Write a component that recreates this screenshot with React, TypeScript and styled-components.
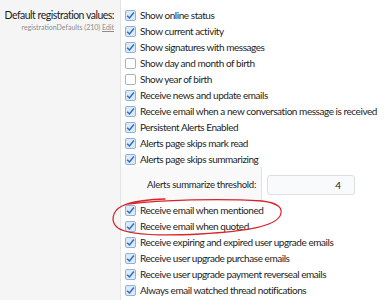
import React, { FC } from "react";
import styled, { createGlobalStyle } from "styled-components";

const Global = createGlobalStyle`
  html, body {
    margin: 0;
    padding: 0;
    background: #ffffff;
  }
  body {
    font-family: Lato, "Liberation Sans", Arial, sans-serif;
    color: #1d1d1d;
  }
`;

const Page = styled.div`
  position: relative;
  display: flex;
  width: 384px;
  height: 300px;
  overflow: hidden;
`;

const LabelCol = styled.div`
  width: 112px;
  flex: none;
  background: #f5f5f5;
  border-right: 1px solid #e4e4e4;
  padding: 8px 6px 0 2px;
  text-align: right;
  white-space: nowrap;
`;

const LabelText = styled.div`
  font-size: 10.5px;
  line-height: 14px;
  letter-spacing: -0.5px;
`;

const Hint = styled.div`
  font-size: 7px;
  line-height: 11px;
  color: #8c8c8c;

  a {
    color: #8c8c8c;
    text-decoration: underline;
  }
`;

const InputCol = styled.div`
  flex: 1;
  padding: 7px 0 0 4px;
`;

const CheckRow = styled.label`
  display: flex;
  align-items: center;
  gap: 4px;
  height: 16px;
  font-size: 10px;
  letter-spacing: -0.45px;
  white-space: nowrap;
`;

const Box = styled.span<{ $checked?: boolean }>`
  width: 11px;
  height: 11px;
  flex: none;
  box-sizing: border-box;
  border-radius: 2px;
  border: 1px solid ${(p) => (p.$checked ? "#8fb2da" : "#a9b3bf")};
  background: ${(p) => (p.$checked ? "#dde9f6" : "#ffffff")};
  display: flex;
  align-items: center;
  justify-content: center;
`;

const SubRow = styled.div`
  display: flex;
  margin-left: -4px;
  height: 35px;
`;

const SubLabel = styled.div`
  width: 141px;
  flex: none;
  background: #f9f9f9;
  border-right: 1px solid #e2e2e2;
  display: flex;
  align-items: center;
  justify-content: flex-end;
  padding-right: 5px;
  box-sizing: border-box;
  font-size: 9.6px;
  letter-spacing: -0.3px;
  white-space: nowrap;
`;

const SubInput = styled.div`
  display: flex;
  align-items: center;
  padding-left: 5px;
`;

const NumberBox = styled.input`
  width: 88px;
  height: 20px;
  box-sizing: border-box;
  border: 1px solid #dcdfe3;
  border-radius: 3px;
  background: #f9fafb;
  text-align: right;
  padding: 0 13px 0 0;
  font-family: inherit;
  font-size: 10px;
  color: #1d1d1d;
  outline: none;
`;

const Scribble = styled.svg`
  position: absolute;
  left: 0;
  top: 0;
  pointer-events: none;
`;

const Check: FC<{ checked?: boolean; label: string }> = ({ checked, label }) => (
  <CheckRow>
    <Box $checked={checked}>
      {checked && (
        <svg width="9" height="9" viewBox="0 0 8 8">
          <path d="M1 4.2 L3.1 6.2 L7 1.3" fill="none" stroke="#2a6fbd" strokeWidth="1.3" />
        </svg>
      )}
    </Box>
    {label}
  </CheckRow>
);

const before: [boolean, string][] = [
  [true, "Show online status"],
  [true, "Show current activity"],
  [true, "Show signatures with messages"],
  [false, "Show day and month of birth"],
  [false, "Show year of birth"],
  [true, "Receive news and update emails"],
  [true, "Receive email when a new conversation message is received"],
  [true, "Persistent Alerts Enabled"],
  [true, "Alerts page skips mark read"],
  [true, "Alerts page skips summarizing"],
];

const after: [boolean, string][] = [
  [true, "Receive email when mentioned"],
  [true, "Receive email when quoted"],
  [true, "Receive expiring and expired user upgrade emails"],
  [true, "Receive user upgrade purchase emails"],
  [true, "Receive user upgrade payment reverseal emails"],
  [true, "Always email watched thread notifications"],
];

const App: FC = () => {
  return (
    <>
      <Global />
      <Page>
        <LabelCol>
          <LabelText>Default registration values:</LabelText>
          <Hint>
            registrationDefaults (210) <a>Edit</a>
          </Hint>
        </LabelCol>
        <InputCol>
          {before.map(([c, l]) => (
            <Check key={l} checked={c} label={l} />
          ))}
          <SubRow>
            <SubLabel>Alerts summarize threshold:</SubLabel>
            <SubInput>
              <NumberBox readOnly value="4" />
            </SubInput>
          </SubRow>
          {after.map(([c, l]) => (
            <Check key={l} checked={c} label={l} />
          ))}
        </InputCol>
        <Scribble width="384" height="300">
          <path
            d="M128 204 C160 200 220 198 262 201 C278 203 284 208 280 216 C274 226 250 231 200 234 C160 236 128 235 118 228 C110 222 112 211 122 206 C130 202 150 199 165 199"
            fill="none"
            stroke="#d7262b"
            strokeWidth="1.3"
            strokeLinecap="round"
          />
        </Scribble>
      </Page>
    </>
  );
};

export default App;
